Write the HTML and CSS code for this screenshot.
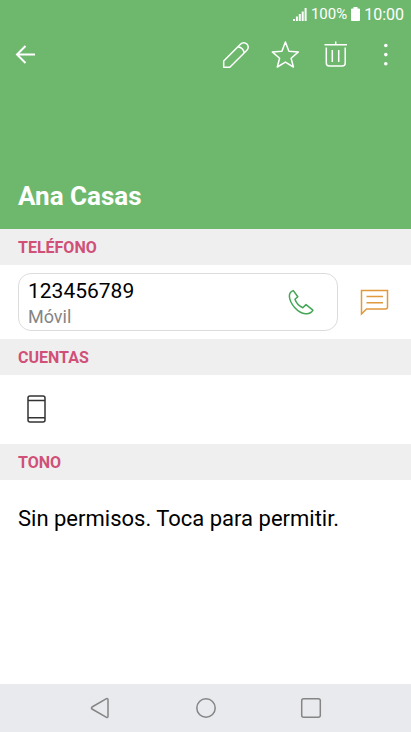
FILE: index.html
```html
<!DOCTYPE html>
<html lang="es">
<head>
<meta charset="utf-8">
<meta name="viewport" content="width=device-width, initial-scale=1">
<title>Ana Casas</title>
<link rel="stylesheet" href="styles.css">
</head>
<body>
<header class="hero">
  <div class="status">
    <svg width="14" height="14" viewBox="0 0 14 14" fill="none" stroke="currentColor" stroke-width="2"><path d="M1 14v-2M3.900 14v-4.500M6.800 14V7M9.700 14V4.500M12.600 14V1"/></svg>
    <span class="percent">100%</span>
    <svg width="9" height="14" viewBox="0 0 9 14" fill="currentColor"><path d="M2.500 0h4v1.500H8a1 1 0 0 1 1 1V13a1 1 0 0 1-1 1H1a1 1 0 0 1-1-1V2.500a1 1 0 0 1 1-1h1.500z"/></svg>
    <span class="clock">10:00</span>
  </div>
  <div class="toolbar">
    <button class="tool back" aria-label="Atrás"><svg width="32" height="32" viewBox="0 0 32 32" fill="none" stroke="currentColor" stroke-width="2"><path d="M26 15.500H8.500M16.500 7l-8.500 8.500 8.500 8.500"/></svg></button>
    <button class="tool" aria-label="Editar"><svg width="32" height="32" viewBox="0 0 32 32" fill="none" stroke="currentColor" stroke-width="1.500" stroke-linejoin="round"><path d="M3.700 28.300v-6.300L20.700 5a4.300 4.300 0 0 1 6.200 0 4.300 4.300 0 0 1 0 6.200L9.800 28.300zM18 7.700c3.200.5 5.700 3 6.200 6.200"/></svg></button>
    <button class="tool" aria-label="Favorito"><svg width="32" height="32" viewBox="0 0 32 32" fill="none" stroke="currentColor" stroke-width="1.500" stroke-linejoin="round"><path d="M15.400 3l3.500 9.200 9.500.7-7.300 6.300 2.300 8.800-8-4.900L7.300 28l2.300-8.800-7.300-6.300 9.600-.7z"/></svg></button>
    <button class="tool" aria-label="Eliminar"><svg width="32" height="32" viewBox="0 0 32 32" fill="none" stroke="currentColor" stroke-width="1.500"><path d="M4.500 5.800h22.500M15.700 2.500v3.300M6.300 8.500v15.500a3 3 0 0 0 3 3h12.900a3 3 0 0 0 3-3V8.500M12.300 11v12M18.700 11v12"/></svg></button>
    <button class="tool" aria-label="Más opciones"><svg width="32" height="32" viewBox="0 0 32 32" fill="currentColor"><circle cx="15.800" cy="6.500" r="1.800"/><circle cx="15.800" cy="15.600" r="1.800"/><circle cx="15.800" cy="24.700" r="1.800"/></svg></button>
  </div>
  <h1 class="name">Ana Casas</h1>
</header>
<main>
  <h2 class="section">TELÉFONO</h2>
  <div class="phone-row">
    <button class="card">
      <span class="lines"><span class="number">123456789</span><span class="kind">Móvil</span></span>
      <svg width="26" height="28" viewBox="0 -1 26 28" fill="none" stroke="currentColor" stroke-width="1.500" stroke-linejoin="round"><path d="M5.300.6C2.600 1.600 1.200 3.800 1.400 6.500 1.900 14 10 23 17.500 23.700c3.300.3 6.200-1.200 7.400-3.500L18 14.600l-3.200 3.100C11 16 8.100 12.800 7 9.300L9.800 6.700z"/></svg>
    </button>
    <button class="message" aria-label="Enviar mensaje"><svg width="30" height="28" viewBox="0 0 30 28" fill="none" stroke="currentColor" stroke-width="1.500"><path d="M1.500 2.500h26v16.500a2 2 0 0 1-2 2H6.500L1.500 26zM6.500 8.500h16.500M6.500 14.800h16.500"/></svg></button>
  </div>
  <h2 class="section">CUENTAS</h2>
  <div class="accounts">
    <svg width="20" height="28" viewBox="0 0 20 28" fill="none" stroke="currentColor" stroke-width="1.500" role="img" aria-label="Teléfono"><rect x="1" y="1" width="17" height="26" rx="2"/><path d="M1 5.500h17M1 22.800h17"/></svg>
  </div>
  <h2 class="section">TONO</h2>
  <button class="ringtone">Sin permisos. Toca para permitir.</button>
</main>
<nav class="navbar">
  <button class="nav" aria-label="Atrás"><svg width="24" height="24" viewBox="0 0 24 24"><path d="M18.500 2.700a1 1 0 0 1 1.500.9v16.800a1 1 0 0 1-1.500.9L4 13a1.200 1.200 0 0 1 0-2z"/></svg></button>
  <button class="nav" aria-label="Inicio"><svg width="24" height="24" viewBox="0 0 24 24"><circle cx="12" cy="12" r="9.200"/></svg></button>
  <button class="nav" aria-label="Recientes"><svg width="24" height="24" viewBox="0 0 24 24"><rect x="2.700" y="2.700" width="18.600" height="18.600" rx="2"/></svg></button>
</nav>
</body>
</html>
```
FILE: styles.css
```css
* { box-sizing: border-box; }
body {
  margin: 0;
  min-height: 100vh;
  display: flex;
  flex-direction: column;
  background: #fff;
  color: #000;
  font-family: Roboto, "Liberation Sans", sans-serif;
}
button {
  margin: 0;
  padding: 0;
  border: 0;
  background: none;
  color: inherit;
  font: inherit;
  text-align: left;
}
svg { display: block; flex: none; }
main { flex: 1; }
.hero { background: #6eb86e; color: #fff; }
.status {
  display: flex;
  align-items: center;
  justify-content: flex-end;
  height: 28px;
  margin-bottom: 2px;
  padding: 0 7px;
  gap: 4px;
}
.percent { font-size: 15px; }
.clock { font-size: 16px; }
.toolbar { display: flex; height: 50px; }
.tool {
  width: 50px;
  display: flex;
  align-items: center;
  justify-content: center;
}
.back { margin-right: auto; }
.name {
  margin: 0;
  padding: 100px 18px 17px;
  font-size: 26px;
  line-height: 32px;
  font-weight: 700;
}
.section {
  margin: 0;
  padding: 1px 18px 0;
  background: #efefef;
  color: #d05078;
  font-size: 16px;
  line-height: 35px;
  font-weight: 700;
}
.phone-row { display: flex; padding: 8px 0 8px 18px; }
.card {
  flex: 1;
  display: flex;
  align-items: center;
  padding: 3px 23px 1px 9px;
  border: 1px solid #dcdcdc;
  border-radius: 13px;
  color: #43a556;
}
.lines { flex: 1; display: flex; flex-direction: column; }
.number { color: #000; font-size: 21px; line-height: 28px; }
.kind { color: #858585; font-size: 18px; line-height: 24px; }
.message {
  width: 73px;
  display: flex;
  align-items: center;
  justify-content: center;
  color: #e0993f;
}
.accounts { padding: 20px 27px 21px; color: #333; }
.ringtone {
  display: block;
  width: 100%;
  padding: 25px 18px;
  font-size: 22px;
  line-height: 28px;
}
.navbar {
  display: flex;
  height: 48px;
  padding: 0 47px;
  background: #e9eaee;
}
.nav {
  flex: 1;
  display: flex;
  align-items: center;
  justify-content: center;
  fill: none;
  stroke: #858585;
  stroke-width: 1.5;
}
```
